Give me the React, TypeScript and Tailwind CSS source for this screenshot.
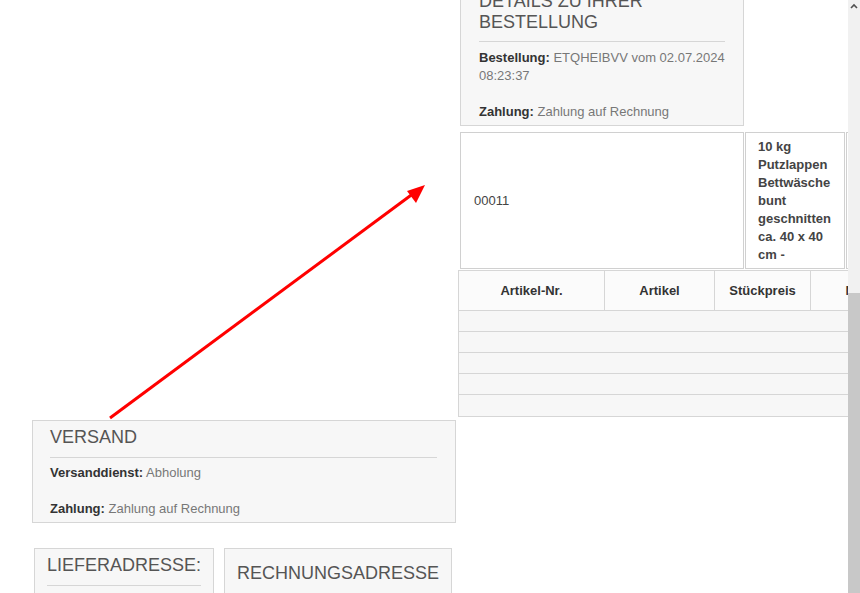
import React from 'react'

// Order confirmation page, scrolled and overflowing to the right

function Label({ name, value }: { name: string; value: string }) {
  return (
    <>
      <span className="font-bold text-[#333]">{name}</span> <span className="text-[#777]">{value}</span>
    </>
  )
}

export default function App() {
  return (
    <div className="relative flex w-[860px] h-[593px] overflow-hidden bg-white font-['Liberation_Sans',Arial,sans-serif]">
      {/* Page content */}
      <div className="w-[848px] h-full overflow-hidden flex flex-col">
        {/* Details zu Ihrer Bestellung */}
        <div className="ml-[460px] -mt-[16px] w-[284px] shrink-0 border border-[#d6d6d6] bg-[#f7f7f7] pl-[18px] pr-[18px] pt-[6px] pb-[4px]">
          <h2 className="text-[18px] leading-[1.15] text-[#555] pb-[9px] border-b border-[#d6d6d6]">
            DETAILS ZU IHRER BESTELLUNG
          </h2>
          <p className="mt-[7px] text-[13px] leading-[18px]">
            <Label name="Bestellung:" value="ETQHEIBVV vom 02.07.2024 08:23:37" />
            <br />
            <br />
            <Label name="Zahlung:" value="Zahlung auf Rechnung" />
          </p>
        </div>

        {/* Artikel row */}
        <div className="ml-[460px] mt-[6px] flex gap-[1px] shrink-0 text-[13px] leading-[18px] text-[#444]">
          <div className="w-[284px] shrink-0 border border-[#d0d0d0] bg-white flex items-center px-[13px]">00011</div>
          <div className="w-[100px] shrink-0 border border-[#d0d0d0] bg-white pl-[12px] pr-[10px] pt-[5px] pb-[4px] font-bold">
            10 kg Putzlappen Bettwäsche bunt geschnitten ca. 40 x 40 cm -
          </div>
          <div className="w-[100px] shrink-0 border border-[#d0d0d0] bg-white" />
        </div>

        {/* Artikel table */}
        <div className="ml-[458px] mt-[1px] w-[560px] shrink-0 text-[13px] text-[#333]">
          <div className="flex h-[41px] bg-[#fbfbfb] border border-[#d6d6d6] font-bold">
            <div className="w-[146px] flex items-center justify-center border-r border-[#d6d6d6]">Artikel-Nr.</div>
            <div className="w-[110px] flex items-center justify-center border-r border-[#d6d6d6]">Artikel</div>
            <div className="w-[96px] flex items-center justify-center border-r border-[#d6d6d6]">Stückpreis</div>
            <div className="w-[111px] flex items-center justify-center border-r border-[#d6d6d6]">Menge</div>
            <div className="flex-1 flex items-center justify-center">Gesamt</div>
          </div>
          {[21, 21, 21, 21, 22].map((h, i) => (
            <div
              key={i}
              className={`${h === 22 ? 'h-[22px]' : 'h-[21px]'} bg-[#f7f7f7] border-x border-b border-[#d6d6d6]`}
            />
          ))}
        </div>

        {/* Versand */}
        <div className="ml-[32px] mt-[3px] w-[424px] shrink-0 border border-[#d6d6d6] bg-[#f7f7f7] pl-[17px] pr-[18px] pt-[6px] pb-[4px]">
          <h2 className="text-[18px] leading-[1.15] text-[#555] pb-[9px] border-b border-[#d6d6d6]">VERSAND</h2>
          <p className="mt-[6px] text-[13px] leading-[18px]">
            <Label name="Versanddienst:" value="Abholung" />
            <br />
            <br />
            <Label name="Zahlung:" value="Zahlung auf Rechnung" />
          </p>
        </div>

        {/* Adressen */}
        <div className="ml-[34px] mt-[25px] flex gap-[10px] items-start shrink-0">
          <div className="w-[180px] h-[80px] border border-[#d6d6d6] bg-[#f7f7f7] px-[12px] pt-[6px]">
            <h2 className="text-[18px] leading-[1.15] text-[#555] pb-[9px] border-b border-[#d6d6d6]">LIEFERADRESSE:</h2>
          </div>
          <div className="w-[228px] h-[80px] border border-[#d6d6d6] bg-[#f7f7f7] px-[12px] pt-[14px]">
            <h2 className="text-[18px] leading-[1.15] text-[#555] whitespace-nowrap">RECHNUNGSADRESSE</h2>
          </div>
        </div>
      </div>

      {/* Scrollbar */}
      <div className="w-[12px] h-full bg-[#f1f1f1] flex flex-col justify-between">
        <div className="h-[12px] flex items-center justify-center">
          <svg width="8" height="6" viewBox="0 0 8 6">
            <path d="M1 5 L4 2 L7 5" fill="none" stroke="#505050" strokeWidth="1.6" />
          </svg>
        </div>
        <div className="h-[300px] bg-[#c8c8c8]" />
      </div>

      {/* Annotation arrow */}
      <svg className="absolute inset-0 pointer-events-none" width="860" height="593" viewBox="0 0 860 593">
        <line x1="110" y1="418" x2="414" y2="193" stroke="#ff0000" strokeWidth="3" />
        <polygon points="425,185 407,191 416,203" fill="#ff0000" />
      </svg>
    </div>
  )
}
